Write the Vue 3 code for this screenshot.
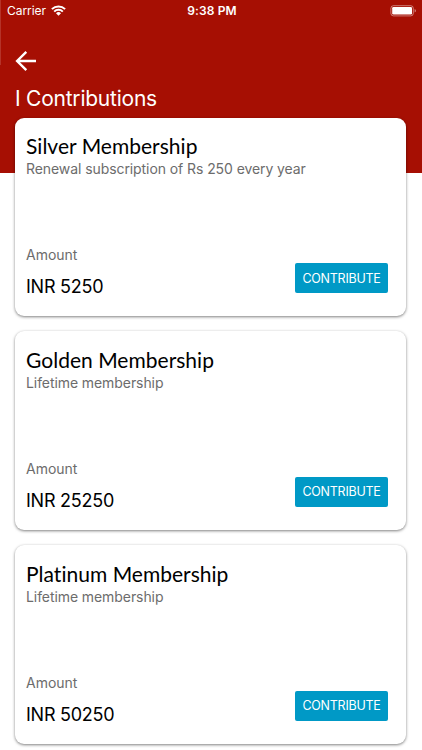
<script setup>
import { ref } from 'vue';

const memberships = ref([
  { name: 'Silver Membership', description: 'Renewal subscription of Rs 250 every year', amount: 5250 },
  { name: 'Golden Membership', description: 'Lifetime membership', amount: 25250 },
  { name: 'Platinum Membership', description: 'Lifetime membership', amount: 50250 }
]);
</script>

<template>
  <div class="screen">
    <header class="header">
      <div class="status-bar">
        <div class="carrier">
          <span>Carrier</span>
          <svg class="wifi" width="15" height="11" viewBox="0 0 15 11" fill="none" stroke="#fff" stroke-width="2">
            <path d="M0.9 4.1a9.4 9.4 0 0 1 13.2 0" />
            <path d="M3.2 6.6a6.1 6.1 0 0 1 8.6 0" />
            <path d="M7.5 10.8L5 8.3a3.5 3.5 0 0 1 5 0z" fill="#fff" stroke="none" />
          </svg>
        </div>
        <span class="time">9:38 PM</span>
        <svg class="battery" width="27" height="12" viewBox="0 0 27 12">
          <rect x="0.9" y="0.7" width="22.4" height="10.2" rx="2.6" fill="none" stroke="#fff" stroke-opacity="0.45" />
          <rect x="2.2" y="2" width="19.8" height="7.6" rx="1.3" fill="#fff" />
          <path d="M24.6 4v3.6c1.8-.6 1.8-3 0-3.6z" fill="#fff" fill-opacity="0.5" />
        </svg>
      </div>
      <button class="back" aria-label="Back">
        <svg width="22" height="22" viewBox="0 0 22 22" fill="none" stroke="#fff" stroke-width="2.4">
          <path d="M11.3 1.8L2.1 11l9.2 9.2M2.1 11H21" />
        </svg>
      </button>
      <h1 class="page-title">I Contributions</h1>
    </header>

    <main class="list">
      <section class="card" v-for="item in memberships" :key="item.name">
        <div>
          <h2 class="name">{{ item.name }}</h2>
          <p class="description">{{ item.description }}</p>
        </div>
        <div class="bottom">
          <div>
            <p class="label">Amount</p>
            <p class="amount">INR {{ item.amount }}</p>
          </div>
          <button class="contribute">CONTRIBUTE</button>
        </div>
      </section>
    </main>
  </div>
</template>

<style>
body {
  margin: 0;
  background: #fff;
}
</style>

<style scoped>
.screen {
  height: 750px;
  overflow: hidden;
  background: #fff;
  font-family: Inter, "Liberation Sans", sans-serif;
}

h1,
h2,
p {
  margin: 0;
  font-weight: 400;
}

button {
  border: none;
  padding: 0;
  font-family: inherit;
}

.header {
  box-sizing: border-box;
  height: 173px;
  /* faint edge line at the top left */
  background: linear-gradient(#c4574f, #c4574f) 0 0 / 0.5px 65px no-repeat #a60f03;
  color: #fff;
}

.status-bar {
  display: grid;
  grid-template-columns: 1fr auto 1fr;
  align-items: center;
  height: 22px;
  padding: 0 5px 0 7px;
  font-size: 12px;
}

.carrier {
  display: flex;
  align-items: center;
  gap: 5px;
  letter-spacing: -0.05px;
}

.wifi {
  margin-top: -2px;
}

.carrier,
.time {
  line-height: 22px;
}

.time {
  font-weight: 600;
  letter-spacing: 0.15px;
}

.battery {
  justify-self: end;
}

.back {
  display: block;
  width: 22px;
  height: 22px;
  margin: 28px 0 0 15px;
  background: none;
}

.back svg {
  display: block;
}

.page-title {
  margin: 13px 0 0 15px;
  font-size: 21px;
  line-height: 28px;
  letter-spacing: -0.23px;
}

.list {
  display: flex;
  flex-direction: column;
  gap: 15.3px;
  margin: -55.5px 16px 0 15px;
}

.card {
  box-sizing: border-box;
  display: flex;
  flex-direction: column;
  justify-content: space-between;
  height: 198.5px;
  padding: 14.5px 18px 16px 11px;
  border-radius: 9px;
  background: #fff;
  box-shadow: 0 1px 3px rgba(0, 0, 0, 0.5);
}

.name {
  font-family: Lato, sans-serif;
  font-size: 21px;
  line-height: 27px;
  font-variant-ligatures: none;
  letter-spacing: 0.02px;
  color: #000;
}

.description,
.label {
  font-size: 14px;
  line-height: 19px;
  color: #6c6c6c;
}

.description {
  letter-spacing: -0.08px;
}

.bottom {
  display: flex;
  justify-content: space-between;
  align-items: flex-end;
}

.amount {
  margin-top: 10px;
  font-size: 18px;
  line-height: 26px;
  letter-spacing: -0.25px;
  color: #000;
}

.contribute {
  width: 93px;
  height: 30px;
  margin-bottom: 7px;
  border-radius: 2px;
  background: #0099c6;
  color: #fff;
  font-size: 12.5px;
  letter-spacing: -0.25px;
}
</style>
